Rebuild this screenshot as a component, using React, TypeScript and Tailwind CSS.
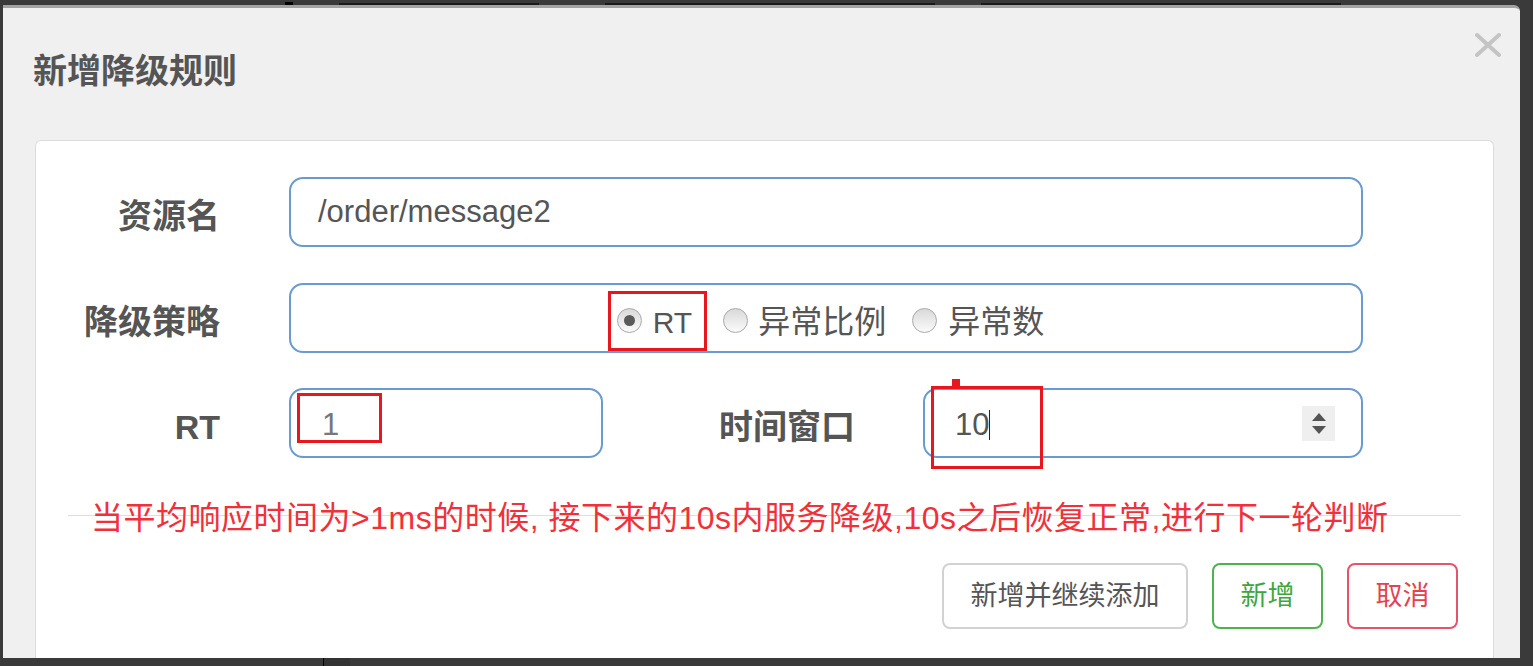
import React from 'react';

const font = 'font-["Liberation_Sans","Noto_Sans_CJK_SC",sans-serif]';

const Radio: React.FC<{ checked?: boolean }> = ({ checked }) => (
  <span className="w-[25px] h-[25px] rounded-full border border-[#a9a9a9] bg-gradient-to-b from-[#d9d9d9] to-[#fbfbfb] flex items-center justify-center shrink-0">
    {checked && <span className="w-[11px] h-[11px] rounded-full bg-[#5a5a5a]" />}
  </span>
);

const Field: React.FC<{ className?: string; children?: React.ReactNode }> = ({ className = '', children }) => (
  <div className={`relative h-[70px] border-2 border-[#6a9bd0] rounded-[14px] bg-white flex items-center ${className}`}>
    {children}
  </div>
);

const Label: React.FC<{ className?: string; children: React.ReactNode }> = ({ className = '', children }) => (
  <label className={`pt-[8px] text-right text-[34px] font-bold text-[#555] ${className}`}>{children}</label>
);

export default function App() {
  return (
    <div className={`w-[1533px] h-[666px] bg-[#3a3a3a] overflow-hidden flex flex-col ${font}`}>
      {/* edge of the page behind the dialog */}
      <div className="h-[5px] flex items-end gap-[6px] pl-[285px]">
        <span className="w-[8px] h-[3px] bg-black" />
        <span className="ml-[40px] w-[200px] h-[2px] bg-[#1a1a1a]" />
        <span className="ml-[60px] w-[330px] h-[2px] bg-[#1a1a1a]" />
        <span className="ml-[40px] w-[360px] h-[2px] bg-[#1a1a1a]" />
      </div>

      <div className="ml-[3px] w-[1517px] h-[653px] border-t-[3px] border-[#a3a3a3] bg-[#f0f0f0] rounded-tr-[6px] flex flex-col shrink-0">
        {/* header */}
        <div className="h-[132px] flex items-start justify-between pl-[30px] pr-[19px]">
          <h2 className="pt-[43px] text-[34px] leading-[40px] font-bold text-[#555]">新增降级规则</h2>
          <svg className="mt-[25px]" width="26" height="24" viewBox="0 0 26 24">
            <path d="M2 2 L24 22 M24 2 L2 22" stroke="#c4c4c4" strokeWidth="4" strokeLinecap="round" />
          </svg>
        </div>

        {/* body panel */}
        <div className="ml-[32px] w-[1459px] flex-1 bg-white border border-b-0 border-[#dcdcdc] rounded-t-[6px] pt-[36px]">
          <div className="flex items-center">
            <Label className="w-[184px] pt-[5px]">资源名</Label>
            <Field className="ml-[69px] w-[1074px] pl-[27px]">
              <span className="text-[31px] text-[#555]">/order/message2</span>
            </Field>
          </div>

          <div className="flex items-center mt-[36px]">
            <Label className="w-[184px]">降级策略</Label>
            <Field className="ml-[69px] w-[1074px] justify-center">
              <div className="flex items-center pt-[5px] text-[32px] text-[#555]">
                <div className="h-[60px] border-[3px] border-[#e8161f] pl-[6px] pr-[12px] flex items-center gap-[11px]">
                  <Radio checked />
                  <span className="text-[30px] pt-[3px]">RT</span>
                </div>
                <div className="ml-[16px] flex items-center gap-[10px]">
                  <Radio />
                  <span className="pt-[3px]">异常比例</span>
                </div>
                <div className="ml-[26px] flex items-center gap-[11px]">
                  <Radio />
                  <span className="pt-[3px]">异常数</span>
                </div>
              </div>
            </Field>
          </div>

          <div className="flex items-center mt-[35px]">
            <Label className="w-[184px]">RT</Label>
            <Field className="ml-[69px] w-[314px] pl-[31px]">
              <span className="pt-[4px] text-[31px] text-[#777]">1</span>
              <span className="absolute left-[6px] top-[3px] w-[85px] h-[50px] border-[3px] border-[#e8161f]" />
            </Field>
            <Label className="w-[252px]">时间窗口</Label>
            <Field className="ml-[68px] w-[440px] pl-[30px] pr-[26px] justify-between">
              <span className="pt-[4px] flex items-center text-[31px] text-[#555]">
                10<span className="w-px h-[30px] bg-[#222]" />
              </span>
              <span className="w-[33px] h-[35px] bg-[#efefef] flex flex-col items-center justify-center gap-[5px]">
                <svg width="14" height="8" viewBox="0 0 14 8"><path d="M7 0 L14 8 L0 8 Z" fill="#555" /></svg>
                <svg width="14" height="8" viewBox="0 0 14 8"><path d="M0 0 L14 0 L7 8 Z" fill="#555" /></svg>
              </span>
              <span className="absolute left-[6px] -top-[4px] w-[112px] h-[83px] border-[3px] border-[#e8161f]" />
              <span className="absolute left-[27px] -top-[11px] w-[8px] h-[7px] bg-[#e8161f]" />
            </Field>
          </div>

          {/* note over the divider */}
          <div className="relative mt-[41px] ml-[32px] w-[1393px] h-[38px]">
            <div className="absolute left-0 right-0 top-[16px] border-t border-[#dedede]" />
            <p className="relative pl-[23px] text-[32px] leading-[38px] tracking-[0.5px] text-[#f2303a] whitespace-nowrap">
              当平均响应时间为&gt;1ms的时候, 接下来的10s内服务降级,10s之后恢复正常,进行下一轮判断
            </p>
          </div>

          <div className="mt-[26px] flex justify-end gap-[24px] pr-[35px] text-[27px]">
            <button className="w-[246px] h-[66px] rounded-[8px] border-2 border-[#d2d2d2] bg-white text-[#555]">新增并继续添加</button>
            <button className="w-[111px] h-[66px] rounded-[8px] border-2 border-[#4fb24f] bg-white text-[#3fa63f]">新增</button>
            <button className="w-[111px] h-[66px] rounded-[8px] border-2 border-[#e6536a] bg-white text-[#e3424f]">取消</button>
          </div>
        </div>
      </div>

      <div className="flex-1 flex">
        <div className="ml-[323px] w-px bg-black" />
        <div className="w-[26px] bg-[#333]" />
      </div>
    </div>
  );
}
